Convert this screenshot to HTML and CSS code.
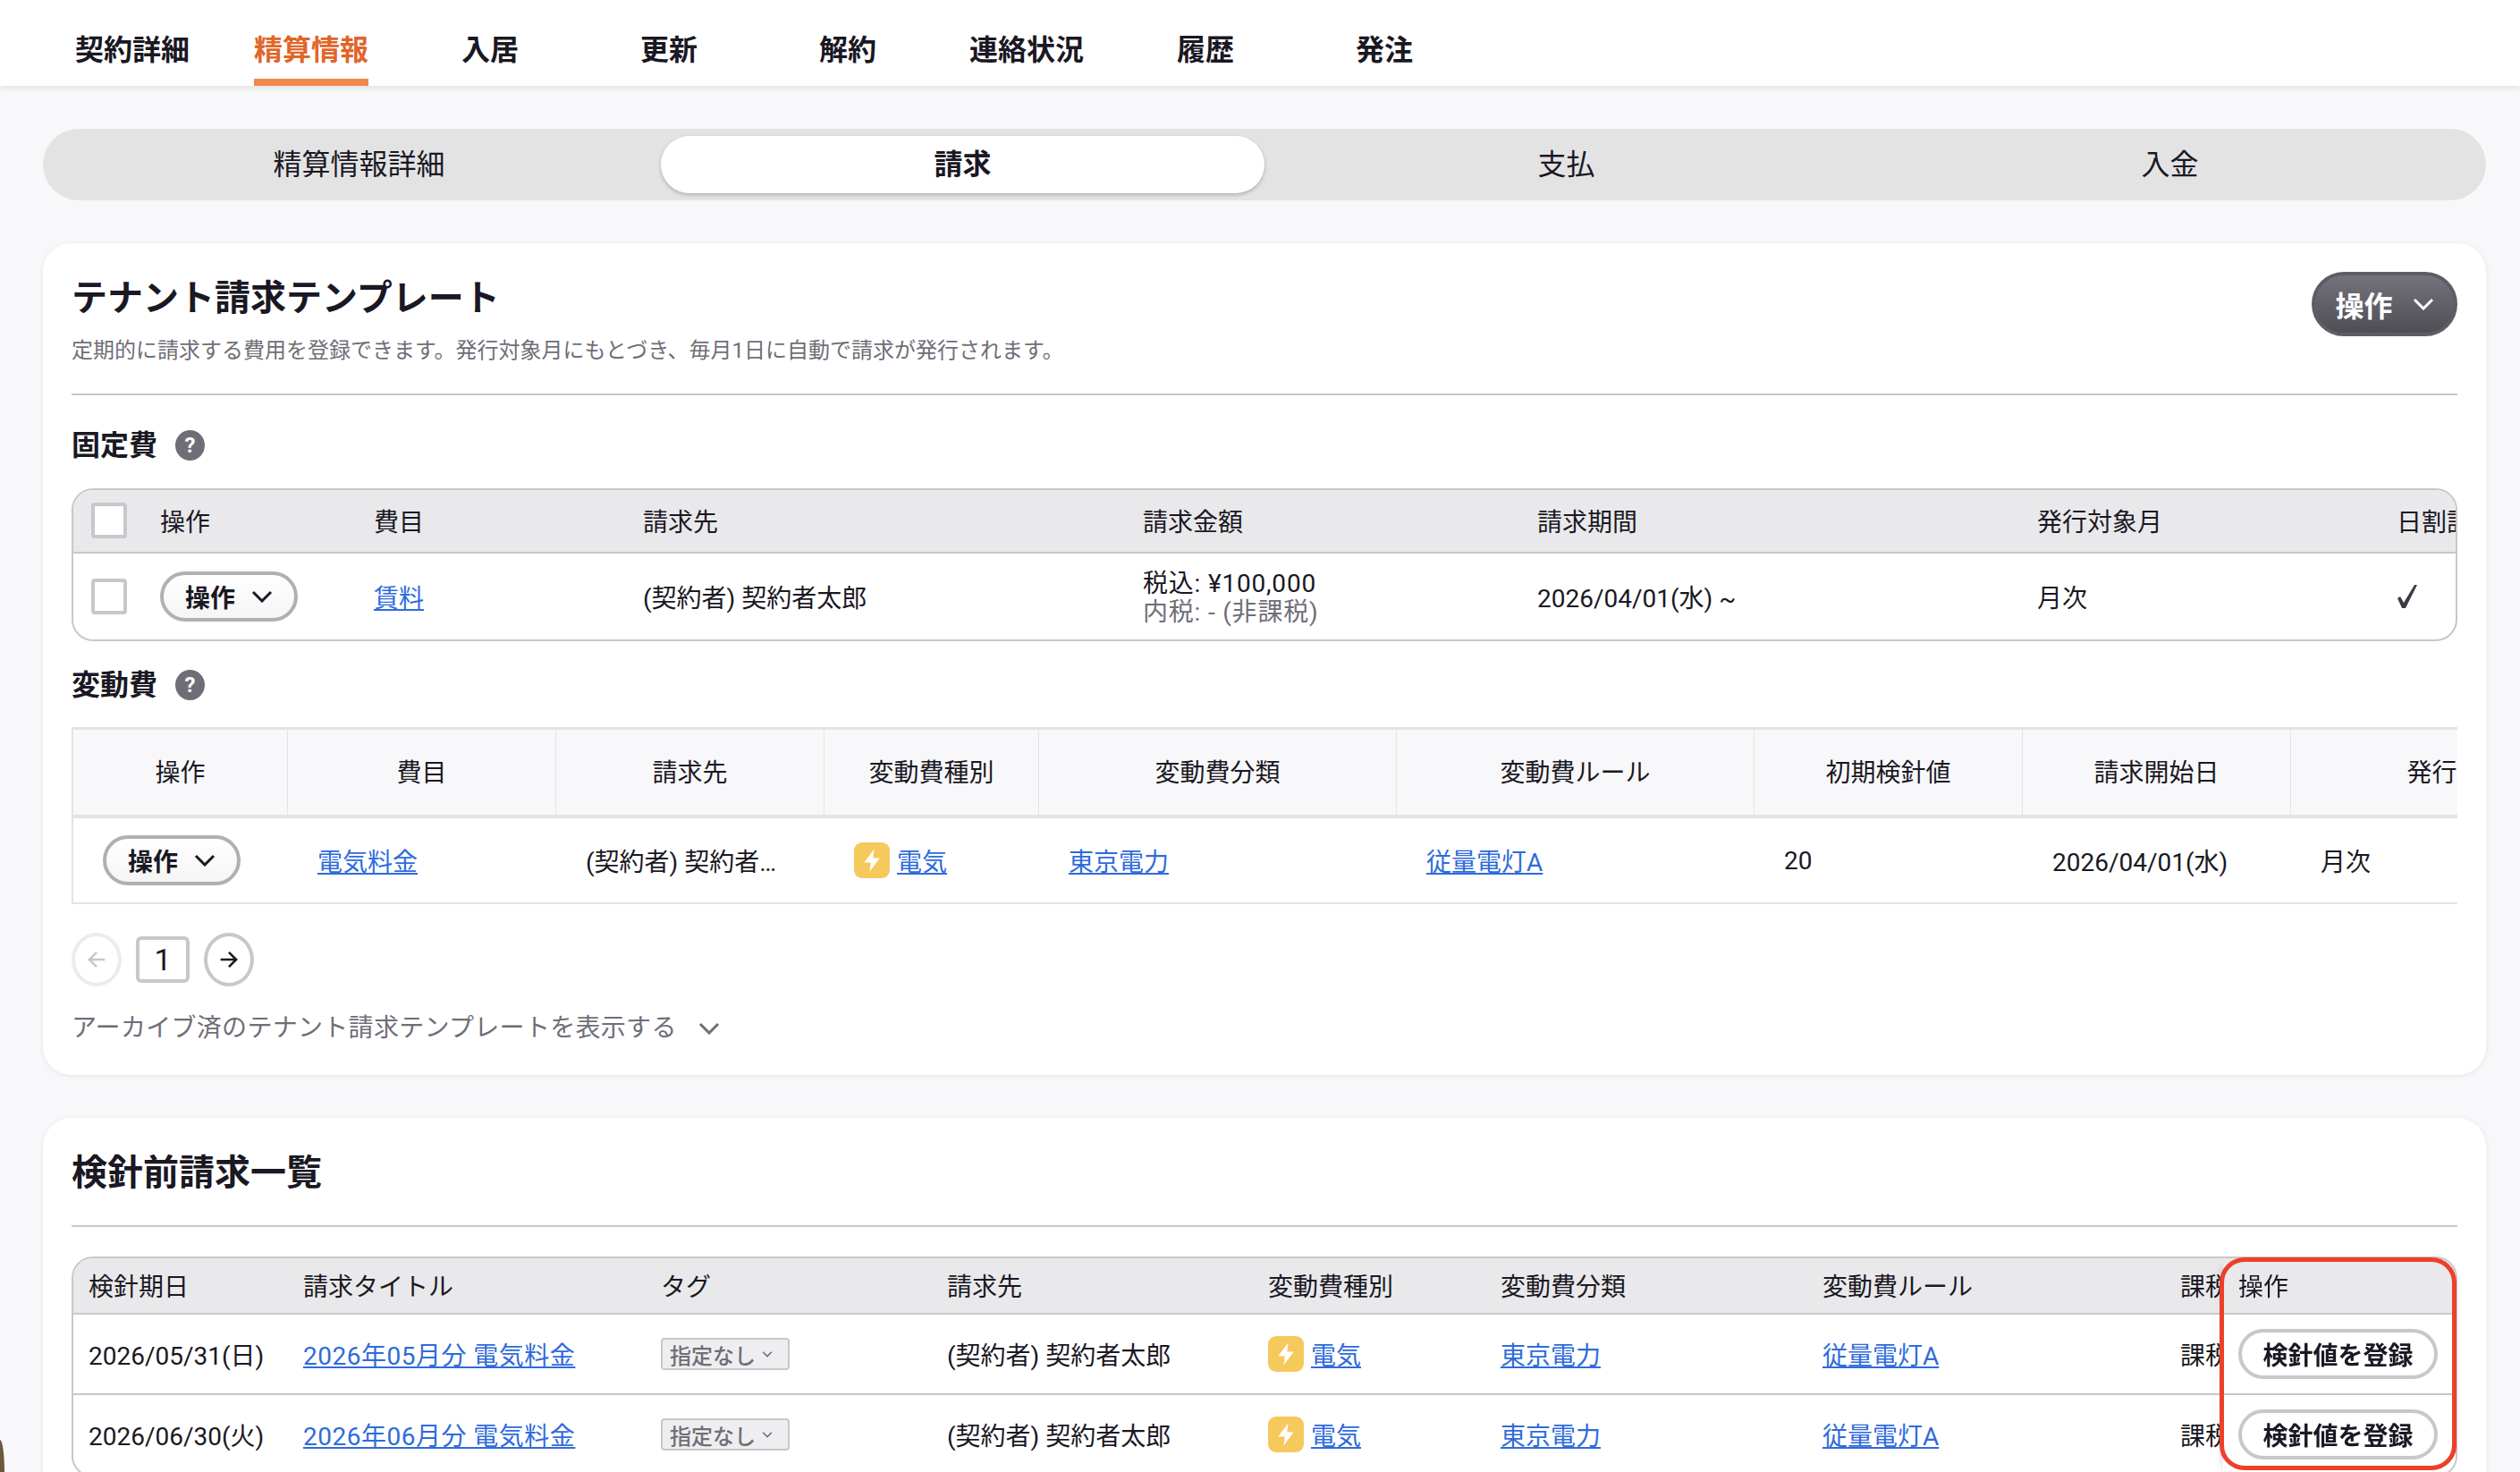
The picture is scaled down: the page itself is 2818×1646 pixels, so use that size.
FILE: index.html
```html
<!DOCTYPE html>
<html lang="ja">
<head>
    <meta charset="utf-8">
    <title>精算情報 - 請求</title>
    <link rel="stylesheet" href="styles.css">
</head>
<body>
    <!-- 上部タブ -->
    <nav class="top-nav">
        <a class="top-tab">契約詳細</a>
        <a class="top-tab active">精算情報</a>
        <a class="top-tab">入居</a>
        <a class="top-tab">更新</a>
        <a class="top-tab">解約</a>
        <a class="top-tab">連絡状況</a>
        <a class="top-tab">履歴</a>
        <a class="top-tab">発注</a>
    </nav>

    <main class="content">
        <div class="segment">
            <a class="segment-item">精算情報詳細</a>
            <a class="segment-item active">請求</a>
            <a class="segment-item">支払</a>
            <a class="segment-item">入金</a>
        </div>

        <!-- テナント請求テンプレート -->
        <section class="card">
            <div class="card-head">
                <div>
                    <h2 class="card-title">テナント請求テンプレート</h2>
                    <p class="card-note">定期的に請求する費用を登録できます。発行対象月にもとづき、毎月1日に自動で請求が発行されます。</p>
                </div>
                <button class="btn-dark">操作
                    <svg class="chev-lg" viewBox="0 0 24 14"><path d="M2 2l10 10 10-10"/></svg>
                </button>
            </div>
            <hr class="divider">

            <h3 class="sub-title">固定費 <span class="help">?</span></h3>
            <div class="table-box">
                <table class="grid fixed-table">
                    <colgroup>
                        <col class="c97"><col class="c239"><col class="c301"><col class="c559"><col class="c441"><col class="c559"><col class="c402"><col class="c200">
                    </colgroup>
                    <thead>
                        <tr>
                            <th class="cb-cell"><span class="checkbox"></span></th>
                            <th>操作</th><th>費目</th><th>請求先</th><th>請求金額</th><th>請求期間</th><th>発行対象月</th><th>日割計算</th>
                        </tr>
                    </thead>
                    <tbody>
                        <tr>
                            <td class="cb-cell"><span class="checkbox"></span></td>
                            <td><button class="btn-menu">操作 <svg class="chev" viewBox="0 0 24 14"><path d="M2 2l10 10 10-10"/></svg></button></td>
                            <td><a class="link">賃料</a></td>
                            <td>(契約者) 契約者太郎</td>
                            <td class="amount-cell"><div class="amount">税込: ¥100,000</div><div class="amount muted">内税: - (非課税)</div></td>
                            <td>2026/04/01(水) ~</td>
                            <td>月次</td>
                            <td><svg class="check" viewBox="0 0 24 26"><path d="M1 15l3-2 4 7L20 0h3L10 26H6z"/></svg></td>
                        </tr>
                    </tbody>
                </table>
            </div>

            <h3 class="sub-title second">変動費 <span class="help">?</span></h3>
            <div class="table-box plain">
                <table class="grid var-table">
                    <colgroup>
                        <col class="c240"><col class="c300"><col class="c300"><col class="c240"><col class="c400"><col class="c400"><col class="c300"><col class="c300"><col class="c400">
                    </colgroup>
                    <thead>
                        <tr>
                            <th>操作</th><th>費目</th><th>請求先</th><th>変動費種別</th><th>変動費分類</th><th>変動費ルール</th><th>初期検針値</th><th>請求開始日</th><th>発行対象月</th>
                        </tr>
                    </thead>
                    <tbody>
                        <tr>
                            <td><button class="btn-menu">操作 <svg class="chev" viewBox="0 0 24 14"><path d="M2 2l10 10 10-10"/></svg></button></td>
                            <td><a class="link">電気料金</a></td>
                            <td class="ellipsis">(契約者) 契約者太郎</td>
                            <td><span class="kind"><span class="bolt"><svg viewBox="0 0 24 24"><path d="M14 2L5 14h6l-1 8 9-12h-6z"/></svg></span><a class="link">電気</a></span></td>
                            <td><a class="link">東京電力</a></td>
                            <td><a class="link">従量電灯A</a></td>
                            <td>20</td>
                            <td>2026/04/01(水)</td>
                            <td>月次</td>
                        </tr>
                    </tbody>
                </table>
            </div>

            <div class="pager">
                <span class="page-arrow off"><svg viewBox="0 0 24 24"><path d="M20 12H5M12 5l-7 7 7 7"/></svg></span>
                <span class="page-num">1</span>
                <span class="page-arrow"><svg viewBox="0 0 24 24"><path d="M4 12h15M12 5l7 7-7 7"/></svg></span>
            </div>
            <div class="archive">アーカイブ済のテナント請求テンプレートを表示する
                <svg class="chev" viewBox="0 0 24 14"><path d="M2 2l10 10 10-10"/></svg>
            </div>
        </section>

        <!-- 検針前請求一覧 -->
        <section class="card">
            <h2 class="card-title">検針前請求一覧</h2>
            <hr class="divider tight">
            <div class="table-wrap">
                <div class="table-box">
                    <table class="grid meter-table">
                        <colgroup>
                            <col class="c240"><col class="c400"><col class="c320"><col class="c359"><col class="c260"><col class="c360"><col class="c400"><col class="c300"><col class="c260">
                        </colgroup>
                        <thead>
                            <tr>
                                <th>検針期日</th><th>請求タイトル</th><th>タグ</th><th>請求先</th><th>変動費種別</th><th>変動費分類</th><th>変動費ルール</th><th>課税区分</th><th class="pin">操作</th>
                            </tr>
                        </thead>
                        <tbody>
                            <tr>
                                <td>2026/05/31(日)</td>
                                <td><a class="link wide">2026年05月分 電気料金</a></td>
                                <td><span class="tag">指定なし<svg viewBox="0 0 20 12"><path d="M3 2l7 7 7-7"/></svg></span></td>
                                <td>(契約者) 契約者太郎</td>
                                <td><span class="kind"><span class="bolt"><svg viewBox="0 0 24 24"><path d="M14 2L5 14h6l-1 8 9-12h-6z"/></svg></span><a class="link">電気</a></span></td>
                                <td><a class="link">東京電力</a></td>
                                <td><a class="link">従量電灯A</a></td>
                                <td>課税対象</td>
                                <td class="pin"><button class="btn-outline">検針値を登録</button></td>
                            </tr>
                            <tr>
                                <td>2026/06/30(火)</td>
                                <td><a class="link wide">2026年06月分 電気料金</a></td>
                                <td><span class="tag">指定なし<svg viewBox="0 0 20 12"><path d="M3 2l7 7 7-7"/></svg></span></td>
                                <td>(契約者) 契約者太郎</td>
                                <td><span class="kind"><span class="bolt"><svg viewBox="0 0 24 24"><path d="M14 2L5 14h6l-1 8 9-12h-6z"/></svg></span><a class="link">電気</a></span></td>
                                <td><a class="link">東京電力</a></td>
                                <td><a class="link">従量電灯A</a></td>
                                <td>課税対象</td>
                                <td class="pin"><button class="btn-outline">検針値を登録</button></td>
                            </tr>
                        </tbody>
                    </table>
                </div>
                <!-- 注釈の赤枠 -->
                <div class="red-frame"></div>
            </div>
        </section>
    </main>

    <div class="window-corner"></div>
</body>
</html>
```

FILE: styles.css
```css
* {
    box-sizing: border-box;
}

html, body {
    height: 1646px;
    margin: 0;
    overflow: hidden;
}

body {
    position: relative;
    background: #f8f8fa;
    color: #1a1823;
    font-family: Roboto, "Noto Sans CJK JP", sans-serif;
    font-size: 28px;
}

button {
    font-family: inherit;
    cursor: pointer;
}

/* 上部タブ */
.top-nav {
    display: flex;
    gap: 72px;
    height: 96px;
    padding-left: 84px;
    background: #fff;
    box-shadow: 0 2px 8px rgba(0, 0, 0, 0.1);
}

.top-tab {
    width: 128px;
    height: 96px;
    padding-top: 33px;
    font-size: 32px;
    font-weight: 700;
    line-height: 46px;
    text-align: center;
}

.top-tab.active {
    color: #e0662a;
    border-bottom: 8px solid #f0884d;
}

.content {
    padding: 48px 38px 0 48px;
}

/* セグメント */
.segment {
    display: grid;
    grid-template-columns: repeat(4, 1fr);
    height: 80px;
    padding: 8px 16px;
    background: #e3e3e4;
    border-radius: 40px;
}

.segment-item {
    font-size: 32px;
    line-height: 64px;
    text-align: center;
}

.segment-item.active {
    background: #fff;
    border-radius: 32px;
    font-weight: 700;
    box-shadow: 0 2px 4px rgba(0, 0, 0, 0.22);
}

/* カード */
.card {
    margin-top: 48px;
    padding: 32px 32px 32px;
    background: #fff;
    border-radius: 32px;
    box-shadow: 0 1px 6px rgba(0, 0, 0, 0.08);
}

.card-head {
    display: flex;
    justify-content: space-between;
}

.card-title {
    margin: 2px 0 0;
    font-size: 40px;
    font-weight: 700;
    line-height: 56px;
}

.card-note {
    margin: 12px 0 0;
    color: #6f6e77;
    font-size: 24px;
    line-height: 36px;
}

.divider {
    height: 2px;
    margin: 30px 0 0;
    background: #c8c7cc;
    border: 0;
}

.divider.tight {
    margin-top: 30px;
}

.sub-title {
    display: flex;
    align-items: center;
    gap: 20px;
    margin: 36px 0 0;
    font-size: 32px;
    font-weight: 700;
    line-height: 40px;
}

.sub-title.second {
    height: 38px;
    margin-top: 30px;
}

.help {
    width: 33px;
    height: 34px;
    background: #6f6e77;
    border-radius: 50%;
    color: #fff;
    font-size: 24px;
    font-weight: 700;
    line-height: 34px;
    text-align: center;
}

/* ボタン */
.btn-dark {
    display: flex;
    align-items: center;
    justify-content: center;
    gap: 22px;
    width: 163px;
    height: 72px;
    padding: 0;
    background: linear-gradient(#74737b, #4f4e55);
    border: 4px solid #5e5d66;
    border-radius: 36px;
    color: #fff;
    font-size: 32px;
    font-weight: 700;
}

.chev-lg {
    width: 24px;
    height: 14px;
    fill: none;
    stroke: #fff;
    stroke-width: 3;
}

.chev {
    width: 24px;
    height: 14px;
    fill: none;
    stroke: #1a1823;
    stroke-width: 3;
}

.btn-menu {
    display: inline-flex;
    align-items: center;
    justify-content: center;
    gap: 18px;
    width: 154px;
    height: 56px;
    padding: 0;
    background: linear-gradient(#fff, #f5f5f6);
    border: 4px solid #b0afb5;
    border-radius: 28px;
    color: #1a1823;
    font-size: 28px;
    font-weight: 700;
}

.btn-outline {
    display: block;
    width: 223px;
    height: 56px;
    padding: 0;
    background: #fff;
    border: 4px solid #c8c7cc;
    border-radius: 28px;
    color: #1a1823;
    font-size: 28px;
    font-weight: 700;
}

/* テーブル */
.table-box {
    margin-top: 28px;
    overflow: hidden;
    background: #fff;
    border: 2px solid #c8c7cc;
    border-radius: 24px;
}

.table-box.plain {
    border: 0;
    border-left: 2px solid #e4e4e5;
    border-radius: 0;
}

.grid {
    border-collapse: separate;
    border-spacing: 0;
    table-layout: fixed;
}

.grid th {
    font-weight: 400;
    text-align: left;
}

.grid td {
    white-space: nowrap;
}

.c97 { width: 97px; }
.c200 { width: 200px; }
.c239 { width: 239px; }
.c240 { width: 240px; }
.c260 { width: 260px; }
.c300 { width: 300px; }
.c301 { width: 301px; }
.c320 { width: 320px; }
.c359 { width: 359px; }
.c360 { width: 360px; }
.c400 { width: 400px; }
.c402 { width: 402px; }
.c441 { width: 441px; }
.c559 { width: 559px; }

.fixed-table {
    width: 2798px;
}

.fixed-table th {
    height: 71px;
    padding: 0 0 2px;
    background: #e9e9eb;
    border-bottom: 2px solid #c8c7cc;
}

.fixed-table td {
    height: 96px;
    padding: 0;
}

.fixed-table .cb-cell {
    padding-left: 20px;
}

.fixed-table .amount-cell {
    padding-top: 3px;
}

.checkbox {
    display: block;
    width: 40px;
    height: 40px;
    background: #fff;
    border: 4px solid #c8c7cc;
    border-radius: 4px;
}

.amount {
    letter-spacing: 0.8px;
    line-height: 32px;
}

.muted {
    color: #6f6e77;
}

.check {
    display: block;
    width: 24px;
    height: 26px;
    fill: #3c3b44;
}

.var-table {
    width: 2880px;
}

.var-table th {
    height: 102px;
    padding: 0 0 3px;
    background: #f8f8fa;
    border-top: 3px solid #e4e4e5;
    border-right: 1px solid #e4e4e5;
    border-bottom: 4px solid #e4e4e5;
    text-align: center;
}

.var-table td {
    height: 96px;
    padding: 0 33px;
    border-bottom: 2px solid #e4e4e5;
}

.ellipsis {
    overflow: hidden;
    text-overflow: ellipsis;
}

.kind {
    display: flex;
    align-items: center;
    gap: 8px;
}

.bolt {
    display: flex;
    align-items: center;
    justify-content: center;
    width: 40px;
    height: 40px;
    background: #f6c95c;
    border-radius: 9px;
}

.bolt svg {
    width: 30px;
    height: 30px;
    fill: #fff;
}

.link {
    color: #2f6bdc;
    text-decoration: underline;
}

.link.wide {
    letter-spacing: 0.5px;
}

/* ページャー */
.pager {
    display: flex;
    align-items: center;
    gap: 16px;
    margin-top: 32px;
}

.page-arrow {
    display: flex;
    align-items: center;
    justify-content: center;
    width: 56px;
    height: 60px;
    background: #fff;
    border: 4px solid #c8c7cc;
    border-radius: 50%;
}

.page-arrow svg {
    width: 28px;
    height: 28px;
    fill: none;
    stroke: #1a1823;
    stroke-width: 2.2;
}

.page-arrow.off {
    border-color: #ececee;
}

.page-arrow.off svg {
    stroke: #c8c7cc;
}

.page-num {
    width: 60px;
    height: 52px;
    border: 4px solid #c8c7cc;
    border-radius: 6px;
    font-size: 34px;
    line-height: 44px;
    text-align: center;
}

.archive {
    display: flex;
    align-items: center;
    gap: 24px;
    margin-top: 27px;
    color: #6f6e77;
    letter-spacing: 0.3px;
    line-height: 40px;
}

.archive .chev {
    stroke: #6f6e77;
}

/* 検針前請求一覧 */
.table-wrap {
    position: relative;
}

.table-wrap .table-box {
    margin-top: 33px;
}

.meter-table {
    width: 2899px;
}

.meter-table th {
    height: 63px;
    padding: 0 17px 2px;
    background: #e9e9eb;
    border-bottom: 2px solid #c8c7cc;
}

.meter-table td {
    height: 90px;
    padding: 0 17px;
    border-bottom: 2px solid #c8c7cc;
}

.pin {
    position: sticky;
    right: 0;
    box-shadow: -8px 0 10px -8px rgba(0, 0, 0, 0.18);
}

.meter-table td.pin {
    background: #fff;
}

.tag {
    display: inline-flex;
    align-items: center;
    gap: 6px;
    width: 144px;
    height: 36px;
    padding-left: 8px;
    background: #eeeef0;
    border: 2px solid #c8c7cc;
    border-radius: 4px;
    color: #6f6e77;
    font-size: 24px;
    font-weight: 500;
}

.tag svg {
    width: 14px;
    height: 9px;
    fill: none;
    stroke: #6f6e77;
    stroke-width: 2.2;
}

.red-frame {
    position: absolute;
    top: 1px;
    right: 1px;
    width: 265px;
    height: 238px;
    border: 5px solid #ec4128;
    border-radius: 28px;
    pointer-events: none;
}

.window-corner {
    position: absolute;
    left: 0;
    bottom: 0;
    width: 5px;
    height: 36px;
    background: #6b5a3a;
    border-top-right-radius: 100% 100%;
}
```
